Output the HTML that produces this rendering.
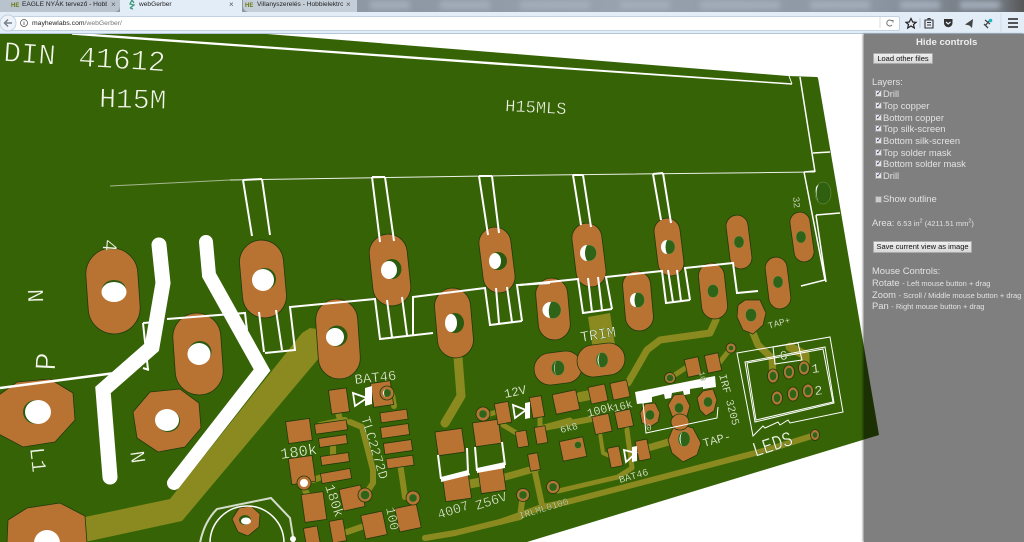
<!DOCTYPE html>
<html><head><meta charset="utf-8"><title>webGerber</title>
<style>
html,body{margin:0;padding:0;width:1024px;height:542px;overflow:hidden;background:#fff;font-family:"Liberation Sans","DejaVu Sans",sans-serif}
#root{position:absolute;left:0;top:0;width:1024px;height:542px;overflow:hidden;filter:blur(.35px)}
#b{position:absolute;left:0;top:0;display:block}
.tabs{position:absolute;left:0;top:0;width:1024px;height:12px;overflow:hidden;background:linear-gradient(90deg,#8f979f 0,#8e98a4 40%,#98a2ae 60%,#8d97a4 85%,#6f757c 98%,#555 100%)}
.blot{position:absolute;top:1px;height:8px;background:#a4aebb;filter:blur(3px)}
.tab{position:absolute;top:0;height:12px;font-size:6.6px;line-height:9px;color:#222;white-space:nowrap;overflow:hidden}
.nav{position:absolute;left:0;top:12px;width:1024px;height:21px;background:#e3edf8;border-bottom:1px solid #b3c5d9}
.url{position:absolute;left:6px;top:4px;width:892px;height:13px;background:#fff;border:1px solid #c3d2e2;border-radius:2px}
.u{position:absolute;left:32px;top:19.5px;font-size:6.8px;line-height:8px;color:#222;white-space:nowrap}.u span{color:#777}
#side{position:absolute;left:864px;top:34px;width:160px;height:508px;background:rgba(0,0,0,.5);box-shadow:-1px 0 2px rgba(0,0,0,.5);color:#e2e2e2;font-size:9.4px}
#side div{position:absolute;white-space:nowrap;line-height:12px}
#side small{font-size:7.5px}
sup{font-size:5.5px;line-height:0}
.btn{background:linear-gradient(#eee,#d8d8d8);color:#111;font-size:7.5px;text-align:center;border:1px solid #aaa;border-radius:1px;box-sizing:border-box;line-height:9px!important}
.cb{width:7px;height:7px;background:#e4e4e4;border:1px solid #999;box-sizing:border-box;color:#225;font-size:7px;line-height:5px!important;text-align:center;font-weight:bold}
svg text{font-family:"Liberation Mono",monospace;fill:#f2f5ea;stroke:#366306;stroke-width:.2}
svg text.l{stroke-width:.7}
svg text.m{stroke-width:.35}
.o{fill:none;stroke:#8a8a20;stroke-linecap:round;stroke-linejoin:round}
.c *{fill:#b87333;stroke:#1e3a0c;stroke-width:.8}
.w{fill:none;stroke:#fff;stroke-width:2;stroke-linejoin:miter}
.t{fill:none;stroke:#fff;stroke-width:1}
.hw{fill:#fff}.hg{fill:#2f6418;stroke:#8aa060;stroke-width:.3}
.v{fill:#b87333;stroke:#1e3a0c;stroke-width:.8}
</style></head><body><div id="root">
<svg id="b" width="1024" height="542" viewBox="0 0 1024 542">
<polygon points="-5,30 267,34 788,76 817,77 818,78 879,435 527,542 -5,542" fill="#366306"/>

<!-- olive traces -->
<polygon points="85,517 170,499 302,333 310,328 324,330 324,352 182,521 85,542 85,542" fill="#8a8a20"/>
<polygon points="588,317 610,313 615,345 593,350" fill="#8a8a20"/>
<g class="o" stroke-width="7">
<path d="M458,357L461,396 445,423" stroke-width="9"/>
<path d="M470,484L480,482" stroke-width="9"/>
<path d="M505,477L537,468"/>
<path d="M533,463L542,505" stroke-width="6"/>
<path d="M500,522L520,515 542,507 567,502 767,450 815,435" stroke-width="6"/>
<path d="M523,494L520,517 455,533 425,538" stroke-width="6"/>
<path d="M558,491L618,477 632,468 627,430" stroke-width="5"/>
<path d="M716,320L710,333 660,340 647,350 628,383" stroke-width="7"/>
<path d="M543,428L597,418" stroke-width="6"/>
<path d="M580,397L590,395" stroke-width="10"/>
<path d="M600,433L603,453 612,457" stroke-width="4"/>
<path d="M627,427L628,443" stroke-width="4"/>
<path d="M648,448L672,441" stroke-width="7"/>
<path d="M753,333L758,345 772,358 773,376"/>
<path d="M790,347L805,355 805,368" stroke-width="9"/>
<path d="M670,378L687,367" stroke-width="5"/>
<path d="M720,362L731,348" stroke-width="5"/>
<path d="M350,422L362,427 373,470 373,483 365,495" stroke-width="6"/>
<path d="M338,412L340,420" stroke-width="6"/>
<path d="M333,447L333,456" stroke-width="6"/>
<path d="M313,480L322,477" stroke-width="6"/>
<path d="M304,488L310,500" stroke-width="6"/>
<path d="M394,406L392,395" stroke-width="6"/>
<path d="M400,463L405,497" stroke-width="6"/>
<path d="M347,532L367,525" stroke-width="6"/>
<path d="M503,425L523,437" stroke-width="5"/>
<path d="M540,418L540,428 570,420" stroke-width="5"/>
<path d="M490,414L497,412" stroke-width="5"/>
<path d="M345,420L320,425" stroke-width="6"/>
</g>

<!-- stadium pads -->
<g class="c">
<rect x="-26" y="-43" width="52" height="86" rx="26" transform="translate(113 291) rotate(-4)"/>
<rect x="-24" y="-41" width="48" height="82" rx="24" transform="translate(198 354) rotate(-4)"/>
<rect x="-22" y="-39" width="44" height="78" rx="22" transform="translate(263 279) rotate(-5)"/>
<rect x="-21" y="-40" width="42" height="80" rx="21" transform="translate(338 339) rotate(-4)"/>
<rect x="-19" y="-36" width="38" height="72" rx="19" transform="translate(390 270) rotate(-6)"/>
<rect x="-18" y="-35" width="36" height="70" rx="18" transform="translate(454 323) rotate(-5)"/>
<rect x="-16" y="-33" width="32" height="66" rx="16" transform="translate(497 260) rotate(-7)"/>
<rect x="-16" y="-31" width="32" height="62" rx="16" transform="translate(553 309) rotate(-5)"/>
<rect x="-15" y="-32" width="30" height="64" rx="15" transform="translate(589 255) rotate(-7)"/>
<rect x="-14" y="-30" width="28" height="60" rx="14" transform="translate(638 301) rotate(-5)"/>
<rect x="-13" y="-29" width="26" height="58" rx="13" transform="translate(669 247) rotate(-7)"/>
<rect x="-13" y="-28" width="26" height="56" rx="13" transform="translate(713 291) rotate(-6)"/>
<rect x="-11" y="-27" width="22" height="54" rx="11" transform="translate(739 242) rotate(-7)"/>
<rect x="-11" y="-26" width="22" height="52" rx="11" transform="translate(778 283) rotate(-7)"/>
<rect x="-10" y="-25" width="20" height="50" rx="10" transform="translate(802 237) rotate(-8)"/>
<rect x="-24" y="-16" width="48" height="32" rx="16" transform="translate(558 368) rotate(-7)"/>
<rect x="-24" y="-16" width="48" height="32" rx="16" transform="translate(601 360) rotate(-7)"/>
<!-- octagons -->
<polygon points="17,382 50,379 73,393 75,420 55,442 23,447 -5,432 -8,400"/>
<polygon points="150,392 180,389 199,403 201,428 185,447 158,452 137,438 133,412"/>
<polygon points="27,508 60,503 85,516 87,543 7,543 8,520"/>
<polygon points="745,300 760,300 766,313 763,325 753,334 743,330 737,317 738,305"/>
<polygon points="682,425 693,428 701,443 697,455 683,462 672,453 668,440 673,428"/>
<polygon points="645,404 655,403 660,413 658,422 650,427 642,423 640,413"/>
<polygon points="674,395 684,394 690,406 687,416 680,420 672,416 668,405"/>
<ellipse cx="680" cy="422" rx="9" ry="8"/>
<polygon points="703,391 713,389 717,400 714,411 706,416 700,410 697,398"/>
<polygon points="239,508 251,506 260,514 259,527 248,536 238,532 232,519"/>
<!-- SMD -->
<rect x="-9" y="-12" width="18" height="24" transform="translate(339 401) rotate(-8)"/>
<rect x="-10" y="-12" width="20" height="24" transform="translate(382 394) rotate(-8)"/>
<rect x="-12" y="-11" width="24" height="22" transform="translate(299 431) rotate(-8)"/>
<rect x="-16" y="-5" width="32" height="10" transform="translate(331 427) rotate(-8)"/>
<rect x="-14" y="-4.500" width="28" height="9" transform="translate(333 441) rotate(-8)"/>
<rect x="-14" y="-4.500" width="28" height="9" transform="translate(335 459) rotate(-8)"/>
<rect x="-15" y="-5" width="30" height="10" transform="translate(336 476) rotate(-10)"/>
<rect x="-13.500" y="-5" width="27" height="10" transform="translate(394 416) rotate(-8)"/>
<rect x="-14" y="-5.500" width="28" height="11" transform="translate(395 431) rotate(-8)"/>
<rect x="-14" y="-5.500" width="28" height="11" transform="translate(398 447) rotate(-8)"/>
<rect x="-13.500" y="-5" width="27" height="10" transform="translate(400 462) rotate(-8)"/>
<rect x="-12" y="-13" width="24" height="26" transform="translate(302 470) rotate(-8)"/>
<rect x="-11" y="-14" width="22" height="28" transform="translate(314 507) rotate(-8)"/>
<rect x="-11" y="-11" width="22" height="22" transform="translate(352 498) rotate(-12)"/>
<rect x="-11" y="-12" width="22" height="24" transform="translate(374 525) rotate(-12)"/>
<rect x="-11" y="-12" width="22" height="24" transform="translate(408 518) rotate(-12)"/>
<rect x="-7" y="-12" width="14" height="22" transform="translate(338 532) rotate(-10)"/>
<rect x="-7" y="-10" width="14" height="17" transform="translate(312 537) rotate(-10)"/>
<rect x="-13.500" y="-12" width="27" height="24" transform="translate(450 442) rotate(-8)"/>
<rect x="-13" y="-12" width="26" height="24" transform="translate(457 488) rotate(-8)"/>
<rect x="-13" y="-12" width="26" height="24" transform="translate(487 433) rotate(-8)"/>
<rect x="-12.500" y="-12" width="25" height="24" transform="translate(492 480) rotate(-8)"/>
<rect x="-7" y="-10.500" width="14" height="21" transform="translate(503 413) rotate(-10)"/>
<rect x="-6" y="-10.500" width="12" height="21" transform="translate(537 407) rotate(-10)"/>
<rect x="-12" y="-10" width="24" height="20" transform="translate(566 402) rotate(-12)"/>
<rect x="-5.500" y="-8" width="11" height="16" transform="translate(522 439) rotate(-10)"/>
<rect x="-5.500" y="-8.500" width="11" height="17" transform="translate(541 435) rotate(-10)"/>
<rect x="-5" y="-8.500" width="10" height="17" transform="translate(534 462) rotate(-10)"/>
<rect x="-8.500" y="-8.500" width="17" height="17" transform="translate(598 394) rotate(-12)"/>
<rect x="-8.500" y="-8.500" width="17" height="17" transform="translate(620 390) rotate(-12)"/>
<rect x="-8.500" y="-9" width="17" height="18" transform="translate(602 424) rotate(-12)"/>
<rect x="-8" y="-8.500" width="16" height="17" transform="translate(624 419) rotate(-12)"/>
<rect x="-12" y="-10" width="24" height="20" transform="translate(573 449) rotate(-12)"/>
<rect x="-6" y="-10" width="12" height="20" transform="translate(615 457) rotate(-12)"/>
<rect x="-6" y="-10" width="12" height="20" transform="translate(643 450) rotate(-12)"/>
<rect x="-7" y="-9" width="14" height="18" transform="translate(693 367) rotate(-12)"/>
<rect x="-7" y="-9" width="14" height="18" transform="translate(713 363) rotate(-12)"/>
</g>

<!-- vias -->
<g class="v">
<circle cx="387" cy="393" r="7"/><circle cx="304" cy="483" r="7"/><circle cx="365" cy="495" r="7"/><circle cx="413" cy="498" r="7"/><circle cx="483" cy="414" r="7"/><circle cx="523" cy="495" r="6.5"/><circle cx="553" cy="487" r="6.5"/><circle cx="670" cy="378" r="5.500"/><circle cx="731" cy="348" r="5"/>
<ellipse cx="815" cy="435" rx="4.500" ry="5.500"/>
<ellipse cx="773" cy="376" rx="5.500" ry="7"/><ellipse cx="789" cy="372" rx="5.500" ry="7"/><ellipse cx="804" cy="368" rx="5.500" ry="7"/><ellipse cx="777" cy="398" rx="5.500" ry="7"/><ellipse cx="793" cy="394" rx="5.500" ry="7"/><ellipse cx="808" cy="391" rx="5.500" ry="7"/>
</g>

<!-- thick white traces -->
<path d="M159,245L163,283 152,347 103,390 110,477" fill="none" stroke="#fff" stroke-width="15" stroke-linecap="round" stroke-linejoin="miter"/>
<path d="M206,242L209,275 262,370 174,483" fill="none" stroke="#fff" stroke-width="14" stroke-linecap="round" stroke-linejoin="miter"/>

<!-- silk lines -->
<polygon points="72,32.500 512,63.500 792,83.300 792,84.700 512,65.800 72,34.800" fill="#fff"/>
<path d="M792,84L789,76" class="t"/>
<path d="M110,186L230,180" class="t" stroke-opacity=".55"/>
<path d="M230,180L550,175 815,172" class="t" stroke-opacity=".9"/>
<path class="w" style="stroke-width:1.500px" d="M800,77L815,172 M813,153L830,152 M804,172L815,171 M804,172L825,280 801,286 M816,215L840,213 M816,215L826,282"/>
<g class="w">
<path d="M243,180L252,236M262,179L270,235M243,180L262,179"/>
<path d="M372,177L380,242M385,177L394,241M372,177L385,177"/>
<path d="M479,176L488,235M492,176L499,233M479,176L492,176"/>
<path d="M573,175L581,225M583,175L591,227M573,175L583,175"/>
<path d="M653,174L661,220M663,173L671,223M653,174L663,173"/>
<path d="M0,388L115,373" stroke-width="2.500"/>
<path d="M167,319L245,313 247,330M143,323L148,370M143,323L157,322M143,368L149,370"/>
<path d="M259,312L264,352M276,310L282,350M265,353L295,350 290,307 375,299 380,339 433,333M387,300L392,337M402,297L407,335M413,336L413,297 485,288 490,325 522,321M496,288L499,323M507,287L512,322M522,321L517,285 550,283"/>
<path d="M520,285L578,279 583,313 612,309M588,278L592,312M598,277L602,310M612,309L606,277 662,271 666,303 690,300M668,270L673,302M677,270L681,301M690,300L685,268 733,263 737,293 758,291"/>
</g>
<!-- diode silk -->
<g fill="none" stroke="#fff" stroke-width="1.800">
<polygon points="353,393 367,398 355,406"/><polygon points="513,405 526,410 515,418"/>
<polygon points="624,450 636,453 626,462"/>
</g>
<polygon points="365,388 372,386 372,404 365,406" fill="#fff"/>
<polygon points="525,403 530,402 530,418 525,419" fill="#fff"/>
<polygon points="632,447 637,446 637,461 632,462" fill="#fff"/>
<!-- diode power silk -->
<path d="M438,455L441,479M467,448L468,472M475,447L477,471M502,442L505,465" fill="none" stroke="#fff" stroke-width="2"/>
<polygon points="441,477 468,470 470,475 441,482" fill="#fff"/><polygon points="477,468 505,462 505,468 477,473" fill="#fff"/>
<!-- IRF silk -->
<polygon fill="#fff" points="635,392 715,376 716,387 703,389 703,387 690,389 690,394 684,395 683,391 672,393 671,398 665,399 664,394 652,397 652,402 646,403 637,404"/>
<path class="t" d="M643,403L646,433 717,418 718,407"/>
<!-- LED connector silk -->
<path class="t" d="M737,353L830,337 843,412 790,423 788,420 780,425 778,422 765,428 763,426 753,436Z"/>
<path class="t" d="M745,362L825,347 834,403 755,422Z"/>
<path class="t" d="M747,363L823,349 833,402 756,420Z"/>
<path d="M773,347L798,343 802,360 775,364Z" fill="none" stroke="#fff" stroke-width="1"/>
<!-- ring -->
<path d="M200,543Q204,522 217,509L271,498 290,518 294,543" fill="none" stroke="#d5dccb" stroke-width="2"/>
<path d="M210,543A37,37 0 0 1 284,543" fill="none" stroke="#fff" stroke-width="1.500"/>
<circle cx="293" cy="539" r="3" fill="#fff"/>

<!-- holes -->
<g>
<ellipse cx="114" cy="290" rx="12" ry="10" fill="#2a5a10"/><ellipse cx="114" cy="292" rx="12.500" ry="10" class="hw"/>
<ellipse cx="200" cy="352" rx="11.500" ry="11" fill="#2a5a10"/><ellipse cx="199" cy="354" rx="11.500" ry="11" class="hw"/>
<ellipse cx="36" cy="412" rx="13" ry="12" fill="#2a5a10"/><ellipse cx="38" cy="412" rx="13" ry="12" class="hw"/>
<ellipse cx="168" cy="421" rx="12" ry="11" fill="#2a5a10"/><ellipse cx="167" cy="420" rx="12" ry="11" class="hw"/>
<path d="M34,543A13,13 0 0 1 60,543Z" fill="#fff"/>
<circle cx="265" cy="279" r="11" fill="#2a5a10"/><circle cx="263" cy="280" r="11" class="hw"/>
<ellipse cx="337" cy="336" rx="10.500" ry="10.500" fill="#2a5a10"/><circle cx="335" cy="337" r="9" class="hw"/>
<ellipse cx="392" cy="269" rx="9.500" ry="10" fill="#2a5a10"/><ellipse cx="389" cy="270" rx="8" ry="9" class="hw"/>
<ellipse cx="455" cy="323" rx="9" ry="10" fill="#2a5a10"/><ellipse cx="451" cy="323" rx="6" ry="9" class="hw"/>
<ellipse cx="498" cy="261" rx="9" ry="9" fill="#2a5a10"/><ellipse cx="495" cy="261" rx="6" ry="8" class="hw"/>
<ellipse cx="553" cy="310" rx="8" ry="8.500" class="hg"/><path d="M551,302A8,8 0 0 0 550,318Q547,310 551,302Z" fill="#fff"/>
<ellipse cx="589" cy="253" rx="7.500" ry="8" class="hg"/><path d="M587,245A7,8 0 0 0 587,261Q583,253 587,245Z" fill="#fff"/>
<ellipse cx="638" cy="300" rx="6.500" ry="7.500" class="hg"/><path d="M636,293A6,7 0 0 0 636,307Q633,300 636,293Z" fill="#fff"/>
<ellipse cx="669" cy="247" rx="6" ry="7" class="hg"/><path d="M667,240A6,7 0 0 0 667,254Q664,247 667,240Z" fill="#fff"/>
<ellipse cx="713" cy="291" rx="5.500" ry="6.500" class="hg"/>
<ellipse cx="739" cy="242" rx="5" ry="6" class="hg"/>
<ellipse cx="778" cy="282" rx="5" ry="6" class="hg"/>
<ellipse cx="801" cy="237" rx="5" ry="6" class="hg"/>
<ellipse cx="823" cy="193" rx="8" ry="11" fill="#2f6010" stroke="#7d9a58" stroke-width=".5"/><path d="M819,184Q814,192 819,203Q815,196 816,187Z" fill="#fff"/>
<ellipse cx="558" cy="368" rx="6.500" ry="7.500" class="hg"/><path d="M556,361Q553,368 556,375Q552,368 556,361Z" fill="#fff"/>
<ellipse cx="602" cy="360" rx="6" ry="7.500" class="hg"/><path d="M600,353Q597,360 600,367Q595,360 600,353Z" fill="#fff"/>
<ellipse cx="751" cy="315" rx="5.500" ry="6.500" class="hg"/>
<ellipse cx="684" cy="439" rx="6" ry="7.500" class="hg"/><path d="M682,432Q679,439 682,446Q677,439 682,432Z" fill="#fff"/>
<ellipse cx="650" cy="415" rx="4.500" ry="5" class="hg"/><ellipse cx="679" cy="408" rx="4.500" ry="5" class="hg"/><ellipse cx="708" cy="402" rx="4.500" ry="5" class="hg"/>
<circle cx="387" cy="393" r="4" class="hg"/><path d="M385,389Q383,393 385,397Q381,393 385,389Z" fill="#fff"/>
<circle cx="304" cy="483" r="4" fill="#fff"/><circle cx="365" cy="495" r="4.500" class="hg"/>
<circle cx="413" cy="498" r="4" class="hg"/><circle cx="483" cy="414" r="4" class="hg"/><circle cx="523" cy="495" r="4" class="hg"/><circle cx="553" cy="487" r="4" class="hg"/><circle cx="670" cy="378" r="3.500" class="hg"/><circle cx="731" cy="348" r="2.500" class="hg"/><circle cx="578" cy="445" r="3.500" class="hg"/>
<ellipse cx="815" cy="435" rx="2.500" ry="3" class="hg"/>
<ellipse cx="773" cy="376" rx="3.500" ry="4.500" class="hg"/><ellipse cx="789" cy="372" rx="3.500" ry="4.500" class="hg"/><ellipse cx="804" cy="368" rx="3.500" ry="4.500" class="hg"/><ellipse cx="777" cy="398" rx="3.500" ry="4.500" class="hg"/><ellipse cx="793" cy="394" rx="3.500" ry="4.500" class="hg"/><ellipse cx="808" cy="391" rx="3.500" ry="4.500" class="hg"/>
<ellipse cx="245" cy="520" rx="6" ry="5" fill="#2a5a10"/><ellipse cx="246" cy="521" rx="5" ry="3.500" fill="#fff"/>
</g>

<!-- silk text -->
<text class="l" font-size="29" transform="translate(3 61) rotate(4)">DIN</text>
<text class="l" font-size="29" transform="translate(78 66) rotate(3.500)">41612</text>
<text class="l" font-size="28" transform="translate(99 107) rotate(1.500)">H15M</text>
<text class="m" font-size="17" transform="translate(505 111) rotate(3)">H15MLS</text>
<text class="m" font-size="21" text-anchor="middle" transform="translate(103 245) rotate(94)">4</text>
<text class="m" font-size="23" text-anchor="middle" transform="translate(28 296) rotate(88)">N</text>
<text class="l" font-size="30" transform="translate(55 371) rotate(-87)">P</text>
<text class="m" font-size="21" transform="translate(30 448) rotate(84)">L1</text>
<text class="m" font-size="21" text-anchor="middle" transform="translate(131 458) rotate(82)">N</text>
<text class="m" font-size="15.400" transform="translate(281 459) rotate(-8)">180k</text>
<text class="m" font-size="14" transform="translate(325 486) rotate(72)">180k</text>
<text class="m" font-size="13" transform="translate(386 508) rotate(78)">100</text>
<text class="m" font-size="14" transform="translate(355 384) rotate(-6)">BAT46</text>
<text class="m" font-size="13.500" transform="translate(361 418) rotate(73)">TLC2272D</text>
<text class="m" font-size="13.500" transform="translate(439 519) rotate(-18)">4007</text>
<text class="m" font-size="13.500" transform="translate(477 510) rotate(-18)">Z56V</text>
<text font-size="12.500" transform="translate(505 398) rotate(-12)">12V</text>
<text font-size="9.500" fill-opacity=".85" transform="translate(520 519) rotate(-17)">IRLML0100</text>
<text font-size="10" transform="translate(561 433) rotate(-14)">6k8</text>
<text font-size="11.500" transform="translate(588 417) rotate(-15)">100k</text>
<text font-size="11" transform="translate(614 412) rotate(-15)">16k</text>
<text font-size="10" transform="translate(620 483) rotate(-16)">BAT46</text>
<text class="m" font-size="15" transform="translate(581 342) rotate(-9)">TRIM</text>
<text font-size="9.500" transform="translate(769 329) rotate(-16)">TAP+</text>
<text font-size="12" transform="translate(704 447) rotate(-15)">TAP-</text>
<text font-size="11" transform="translate(719 375) rotate(75)">IRF 3205</text>
<text font-size="8" transform="translate(699 372) rotate(78)" >10</text>
<text class="m" font-size="21" textLength="41" lengthAdjust="spacingAndGlyphs" transform="translate(755 457) rotate(-18)">LEDS</text>
<text font-size="13" transform="translate(812 373) rotate(-6)">1</text>
<text font-size="13" transform="translate(815 395) rotate(-6)">2</text>
<text font-size="13" transform="translate(780 360) rotate(-5)">6</text>
<text font-size="9" transform="translate(647 431) rotate(-15)">0</text>
<text font-size="9.500" transform="translate(793 197) rotate(85)">32</text>
</svg>

<!-- browser chrome -->
<div class="tabs">
<div class="blot" style="left:370px;width:40px"></div><div class="blot" style="left:440px;width:50px"></div><div class="blot" style="left:520px;width:70px"></div><div class="blot" style="left:620px;width:50px"></div><div class="blot" style="left:700px;width:80px"></div><div class="blot" style="left:810px;width:60px"></div><div class="blot" style="left:900px;width:40px"></div><div class="blot" style="left:960px;width:40px"></div>
<div class="tab" style="left:0;width:120px;background:#b9c3ce;border-radius:0 0 6px 0"></div>
<div class="tab" style="left:243px;width:114px;background:#c4ced8;border-radius:0 0 0 6px"></div>
<div class="tab" style="left:120px;width:122px;background:#e3edf8"></div>
<div class="tab" style="left:11px;top:2px;font-size:6px;font-weight:bold;color:#6b7a10;height:9px">HE</div>
<div class="tab" style="left:22px;top:0;width:85px;height:10px">EAGLE NYÁK tervező - Hobbi</div>
<div class="tab" style="left:111px;top:0;font-size:8px;color:#555;height:10px">×</div>
<svg style="position:absolute;left:127px;top:0" width="10" height="10" viewBox="0 0 10 10"><path d="M5,0L3,4 7,5 3,8M5,0L7,3M3,8L6,9" fill="none" stroke="#3a9a78" stroke-width="1.300"/></svg>
<div class="tab" style="left:139px;top:0;height:10px">webGerber</div>
<div class="tab" style="left:229px;top:0;font-size:8px;color:#555;height:10px">×</div>
<div class="tab" style="left:245px;top:2px;font-size:6px;font-weight:bold;color:#6b7a10;height:9px">HE</div>
<div class="tab" style="left:257px;top:0;width:86px;height:10px">Villanyszerelés - Hobbielektro</div>
<div class="tab" style="left:346px;top:0;font-size:8px;color:#555;height:10px">×</div>
</div>
<div class="nav"><div class="url"></div></div>
<svg style="position:absolute;left:0;top:12px" width="1024" height="21" viewBox="0 12 1024 21">
<circle cx="8" cy="23" r="8" fill="#eef3f9" stroke="#c3d2e2"/>
<path d="M12,23H5M8,19.500L4.500,23 8,26.500" fill="none" stroke="#77808c" stroke-width="1.500"/>
<circle cx="24" cy="23" r="3.500" fill="none" stroke="#555" stroke-width=".8"/><path d="M24,22V25M24,21V21.500" stroke="#555" stroke-width=".8"/>
<path d="M880,17V28" stroke="#ddd"/>
<path d="M892,21A3,3 0 1 0 892,25M890.500,20.500H893V22.500" fill="none" stroke="#777" stroke-width="1"/>
<path d="M911,18.500L912.700,22 916,22.300 913.500,24.500 914.300,28 911,26 907.700,28 908.500,24.500 906,22.300 909.300,22Z" fill="none" stroke="#222" stroke-width="1.200"/>
<path d="M920,18V28" stroke="#b8c8d8"/>
<path d="M925,20H933V28H925ZM927,22.500H931M927,25H931M928,20V18.500H930V20" fill="none" stroke="#333" stroke-width="1.100"/>
<path d="M944,19H952.500V23A4.200,4.200 0 0 1 944,23Z" fill="#333"/><path d="M946,22L948.200,24 950.500,22" fill="none" stroke="#e3edf8" stroke-width="1.200"/>
<path d="M965,24.500L973,19 972,28 969.500,25.500Z" fill="#444"/>
<path d="M985,20L990,24M990,20L985,26M984,24L988,28" fill="none" stroke="#444" stroke-width="1.300"/><circle cx="990.500" cy="20.500" r="1.800" fill="#18b8c0"/>
<path d="M1001,13V32" stroke="#d0dcea"/>
<path d="M1008,19H1018M1008,23H1018M1008,27H1018" stroke="#222" stroke-width="1.500"/>
</svg>
<div class="u">mayhewlabs.com<span>/webGerber/</span></div>

<div id="side">
<div style="left:52px;top:3px;font-weight:bold;font-size:9.6px;color:#eee">Hide controls</div>
<div class="btn" style="left:9px;top:18.500px;width:60px;height:11px">Load other files</div>
<div style="left:8px;top:42px">Layers:</div>
<div class="cb" style="left:11px;top:56px">✓</div><div style="left:19px;top:54px">Drill</div>
<div class="cb" style="left:11px;top:68px">✓</div><div style="left:19px;top:66px">Top copper</div>
<div class="cb" style="left:11px;top:80px">✓</div><div style="left:19px;top:78px">Bottom copper</div>
<div class="cb" style="left:11px;top:91px">✓</div><div style="left:19px;top:89px">Top silk-screen</div>
<div class="cb" style="left:11px;top:103px">✓</div><div style="left:19px;top:101px">Bottom silk-screen</div>
<div class="cb" style="left:11px;top:115px">✓</div><div style="left:19px;top:113px">Top solder mask</div>
<div class="cb" style="left:11px;top:126px">✓</div><div style="left:19px;top:124px">Bottom solder mask</div>
<div class="cb" style="left:11px;top:138px">✓</div><div style="left:19px;top:136px">Drill</div>
<div class="cb" style="left:11px;top:162px;background:#ccc"></div><div style="left:19px;top:159px">Show outline</div>
<div style="left:8px;top:183px">Area: <small>6.53 in<sup>2</sup> (4211.51 mm<sup>2</sup>)</small></div>
<div class="btn" style="left:9px;top:207px;width:99px;height:12px">Save current view as image</div>
<div style="left:8px;top:231px">Mouse Controls:</div>
<div style="left:8px;top:243px">Rotate <small>- Left mouse button + drag</small></div>
<div style="left:8px;top:255px">Zoom <small>- Scroll / Middle mouse button + drag</small></div>
<div style="left:8px;top:266px">Pan <small>- Right mouse button + drag</small></div>
</div>
</div></body></html>
